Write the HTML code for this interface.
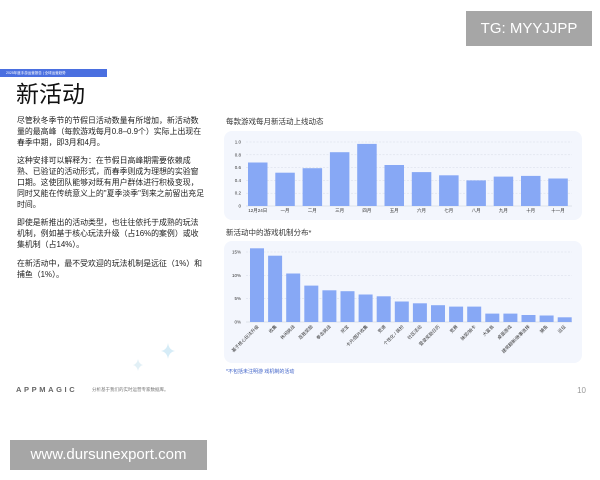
<!DOCTYPE html>
<html><head><meta charset="utf-8"><style>
body{margin:0;width:600px;height:480px;background:#fff;position:relative;overflow:hidden;font-family:"Liberation Sans","Noto Sans CJK SC",sans-serif;color:#222}
.abs{position:absolute}
p{margin:0}
</style></head><body>
<div class="abs" style="left:466px;top:11px;width:126px;height:35px;background:#a6a6a6;color:#fff;font-size:15px;line-height:35px;text-align:center">TG: MYYJJPP</div>
<div class="abs" style="left:0;top:69px;width:107px;height:8px;background:#4a6fe0;color:#fff;font-size:3.5px;line-height:8px;padding-left:6px;box-sizing:border-box;white-space:nowrap">2025年度手游运营报告 | 全球运营趋势</div>
<div class="abs" style="left:16px;top:79px;font-size:23px;line-height:30px;color:#111">新活动</div>
<div class="abs" style="left:17px;top:116px;width:188px;font-size:7.9px;line-height:10.8px;color:#222">
<p>尽管秋冬季节的节假日活动数量有所增加，新活动数量的最高峰（每款游戏每月0.8–0.9个）实际上出现在春季中期，即3月和4月。</p>
<p style="margin-top:8px">这种安排可以解释为：在节假日高峰期需要依赖成熟、已验证的活动形式，而春季则成为理想的实验窗口期。这使团队能够对既有用户群体进行积极变现，同时又能在传统意义上的"夏季淡季"到来之前留出充足时间。</p>
<p style="margin-top:8px">即使是新推出的活动类型，也往往依托于成熟的玩法机制，例如基于核心玩法升级（占16%的案例）或收集机制（占14%）。</p>
<p style="margin-top:8px">在新活动中，最不受欢迎的玩法机制是远征（1%）和捕鱼（1%）。</p>
</div>
<div class="abs" style="left:226px;top:116px;font-size:7.5px;color:#333">每款游戏每月新活动上线动态</div>
<div class="abs" style="left:226px;top:227px;font-size:7.5px;color:#333">新活动中的游戏机制分布*</div>
<svg class="abs" style="left:0;top:0" width="600" height="480" font-family="Liberation Sans, Noto Sans CJK SC, sans-serif">
<rect x="224" y="131" width="358" height="89" rx="8" fill="#f3f6fd"/>
<rect x="224" y="241" width="358" height="122" rx="8" fill="#f3f6fd"/>
<g stroke="#d6dbe6" stroke-width="0.5" stroke-dasharray="2,1.5">
<line x1="246" x2="572" y1="142" y2="142"/><line x1="246" x2="572" y1="154.8" y2="154.8"/><line x1="246" x2="572" y1="167.6" y2="167.6"/><line x1="246" x2="572" y1="180.4" y2="180.4"/><line x1="246" x2="572" y1="193.2" y2="193.2"/>
<line x1="246" x2="572" y1="252" y2="252"/><line x1="246" x2="572" y1="275.3" y2="275.3"/><line x1="246" x2="572" y1="298.7" y2="298.7"/>
</g>
<line x1="246" x2="572" y1="206" y2="206" stroke="#c8ccd6" stroke-width="0.6"/>
<line x1="246" x2="572" y1="322" y2="322" stroke="#c8ccd6" stroke-width="0.6"/>
<g font-size="4.5" fill="#333" text-anchor="end">
<text x="241" y="143.5">1.0</text><text x="241" y="156.3">0.8</text><text x="241" y="169.1">0.6</text><text x="241" y="181.9">0.4</text><text x="241" y="194.7">0.2</text><text x="241" y="207.5">0</text>
<text x="241" y="253.5">15%</text><text x="241" y="276.8">10%</text><text x="241" y="300.2">5%</text><text x="241" y="323.5">0%</text>
</g>
<g fill="#87a8f5">
<rect x="248" y="162.5" width="19.5" height="43.5"/>
<rect x="275.3" y="172.7" width="19.5" height="33.3"/>
<rect x="302.6" y="168.2" width="19.5" height="37.8"/>
<rect x="329.9" y="152.2" width="19.5" height="53.8"/>
<rect x="357.2" y="143.9" width="19.5" height="62.1"/>
<rect x="384.5" y="165" width="19.5" height="41"/>
<rect x="411.8" y="172.1" width="19.5" height="33.9"/>
<rect x="439.1" y="175.3" width="19.5" height="30.7"/>
<rect x="466.4" y="180.4" width="19.5" height="25.6"/>
<rect x="493.7" y="176.6" width="19.5" height="29.4"/>
<rect x="521" y="175.9" width="19.5" height="30.1"/>
<rect x="548.3" y="178.5" width="19.5" height="27.5"/>
</g>
<g font-size="4.5" fill="#333" text-anchor="middle">
<text x="257.7" y="212">12月24日</text><text x="285" y="212">一月</text><text x="312.3" y="212">二月</text><text x="339.6" y="212">三月</text><text x="366.9" y="212">四月</text><text x="394.2" y="212">五月</text><text x="421.5" y="212">六月</text><text x="448.8" y="212">七月</text><text x="476.1" y="212">八月</text><text x="503.4" y="212">九月</text><text x="530.7" y="212">十月</text><text x="558" y="212">十一月</text>
</g>
<g fill="#87a8f5">
<rect x="250" y="248.3" width="14" height="73.7"/>
<rect x="268.1" y="255.7" width="14" height="66.3"/>
<rect x="286.2" y="273.5" width="14" height="48.5"/>
<rect x="304.3" y="285.6" width="14" height="36.4"/>
<rect x="322.4" y="290.3" width="14" height="31.7"/>
<rect x="340.5" y="291.2" width="14" height="30.8"/>
<rect x="358.6" y="294.5" width="14" height="27.5"/>
<rect x="376.7" y="296.3" width="14" height="25.7"/>
<rect x="394.8" y="301.5" width="14" height="20.5"/>
<rect x="412.9" y="303.3" width="14" height="18.7"/>
<rect x="431" y="305.2" width="14" height="16.8"/>
<rect x="449.1" y="306.6" width="14" height="15.4"/>
<rect x="467.2" y="306.6" width="14" height="15.4"/>
<rect x="485.3" y="313.6" width="14" height="8.4"/>
<rect x="503.4" y="313.6" width="14" height="8.4"/>
<rect x="521.5" y="315" width="14" height="7"/>
<rect x="539.6" y="315.5" width="14" height="6.5"/>
<rect x="557.7" y="317.3" width="14" height="4.7"/>
</g>
<g font-size="4.5" fill="#333" text-anchor="end">
<text transform="translate(259,327) rotate(-45)">基于核心玩法升级</text>
<text transform="translate(277,327) rotate(-45)">收集</text>
<text transform="translate(295,327) rotate(-45)">休闲挑战</text>
<text transform="translate(313,327) rotate(-45)">连胜奖励</text>
<text transform="translate(331,327) rotate(-45)">拳击挑战</text>
<text transform="translate(349,327) rotate(-45)">挖宝</text>
<text transform="translate(368,327) rotate(-45)">卡片/图片收集</text>
<text transform="translate(386,327) rotate(-45)">竞速</text>
<text transform="translate(404,327) rotate(-45)">个性化 / 装扮</text>
<text transform="translate(422,327) rotate(-45)">社区活动</text>
<text transform="translate(440,327) rotate(-45)">登录奖励日历</text>
<text transform="translate(458,327) rotate(-45)">竞赛</text>
<text transform="translate(476,327) rotate(-45)">抽奖/抽卡</text>
<text transform="translate(494,327) rotate(-45)">大富翁</text>
<text transform="translate(512,327) rotate(-45)">桌面游戏</text>
<text transform="translate(530,327) rotate(-45)">建筑翻新/故事选择</text>
<text transform="translate(548,327) rotate(-45)">捕鱼</text>
<text transform="translate(566,327) rotate(-45)">远征</text>
</g>
<text x="226" y="373" font-size="5" fill="#3b5fc7">*不包括未注明游 戏机制的活动</text>
<path d="M168 343 Q169 350 175 351 Q169 352 168 359 Q167 352 161 351 Q167 350 168 343Z" fill="#d6ecf7"/>
<path d="M138 359 Q139 364 143 365 Q139 366 138 371 Q137 366 133 365 Q137 364 138 359Z" fill="#e2f0f6"/>
<text x="16" y="392" font-size="7.5" fill="#666" letter-spacing="2.6" font-weight="bold">APPMAGIC</text>
<text x="92" y="391" font-size="4.5" fill="#777">分析基于我们的实时运营专家数据库。</text>
<text x="586" y="393" font-size="8" fill="#999" text-anchor="end">10</text>
</svg>
<div class="abs" style="left:10px;top:440px;width:197px;height:30px;background:#a6a6a6;color:#fff;font-size:15px;line-height:30px;text-align:center">www.dursunexport.com</div>
</body></html>
